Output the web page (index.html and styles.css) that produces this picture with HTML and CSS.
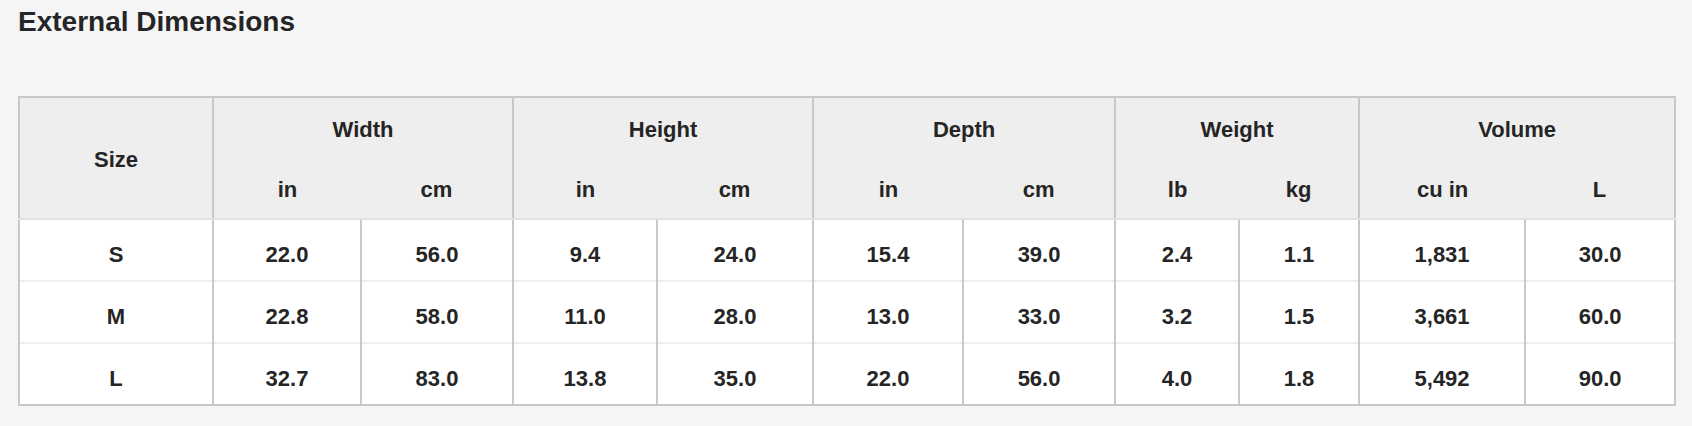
FILE: index.html
```html
<!DOCTYPE html>
<html lang="en">
<head>
<meta charset="utf-8">
<title>External Dimensions</title>
<link rel="stylesheet" href="styles.css">
</head>
<body>
<section class="spec">
  <h2 class="spec-title">External Dimensions</h2>
  <table class="dims">
    <colgroup>
      <col class="c-size">
      <col class="c-w-in"><col class="c-w-cm">
      <col class="c-h-in"><col class="c-h-cm">
      <col class="c-d-in"><col class="c-d-cm">
      <col class="c-wt-lb"><col class="c-wt-kg">
      <col class="c-v-cu"><col class="c-v-l">
    </colgroup>
    <thead>
      <tr class="grp">
        <th rowspan="2" class="size-head">Size</th>
        <th colspan="2">Width</th>
        <th colspan="2">Height</th>
        <th colspan="2">Depth</th>
        <th colspan="2">Weight</th>
        <th colspan="2">Volume</th>
      </tr>
      <tr class="unit">
        <th>in</th><th>cm</th>
        <th>in</th><th>cm</th>
        <th>in</th><th>cm</th>
        <th>lb</th><th>kg</th>
        <th>cu in</th><th>L</th>
      </tr>
    </thead>
    <tbody>
      <tr>
        <td>S</td><td>22.0</td><td>56.0</td><td>9.4</td><td>24.0</td><td>15.4</td><td>39.0</td><td>2.4</td><td>1.1</td><td>1,831</td><td>30.0</td>
      </tr>
      <tr>
        <td>M</td><td>22.8</td><td>58.0</td><td>11.0</td><td>28.0</td><td>13.0</td><td>33.0</td><td>3.2</td><td>1.5</td><td>3,661</td><td>60.0</td>
      </tr>
      <tr>
        <td>L</td><td>32.7</td><td>83.0</td><td>13.8</td><td>35.0</td><td>22.0</td><td>56.0</td><td>4.0</td><td>1.8</td><td>5,492</td><td>90.0</td>
      </tr>
    </tbody>
  </table>
</section>
</body>
</html>
```
FILE: styles.css
```css
html, body {
  margin: 0;
  padding: 0;
  background: #f5f5f5;
}

body {
  font-family: "Liberation Sans", Arial, sans-serif;
  color: #252525;
}

.spec {
  padding: 6px 0 0 18px;
}

.spec-title {
  margin: 0;
  font-size: 28px;
  line-height: 32px;
  font-weight: 700;
  color: #252525;
}

.dims {
  margin-top: 58px;
  border-collapse: collapse;
  table-layout: fixed;
  width: 1656px;
  border: 2px solid #c8c8c8;
  font-size: 22px;
  font-weight: 700;
  text-align: center;
}

.c-size { width: 194px; }
.c-w-in { width: 148px; }
.c-w-cm { width: 152px; }
.c-h-in { width: 144px; }
.c-h-cm { width: 156px; }
.c-d-in { width: 150px; }
.c-d-cm { width: 152px; }
.c-wt-lb { width: 124px; }
.c-wt-kg { width: 120px; }
.c-v-cu { width: 166px; }
.c-v-l { width: 150px; }

.dims th {
  background: #eeeeee;
  font-weight: 700;
  padding: 0;
  border-left: 2px solid #c8c8c8;
  border-right: 2px solid #c8c8c8;
}

.dims .grp th {
  height: 61px;
  padding-top: 4px;
  box-sizing: border-box;
  vertical-align: middle;
}

.dims .size-head {
  padding-top: 0;
  border-bottom: 2px solid #e2e2e2;
}

.dims .unit th {
  height: 61px;
  padding-top: 4px;
  box-sizing: border-box;
  vertical-align: middle;
  border-bottom: 2px solid #e2e2e2;
}

.dims .unit th:nth-child(even) {
  border-left: 0;
}

.dims .unit th:nth-child(odd) {
  border-right: 0;
}

.dims td {
  background: #ffffff;
  height: 62px;
  padding: 10px 0 0;
  box-sizing: border-box;
  vertical-align: middle;
  border-left: 2px solid #c8c8c8;
  border-right: 2px solid #c8c8c8;
  border-top: 2px solid #efefef;
}
```
